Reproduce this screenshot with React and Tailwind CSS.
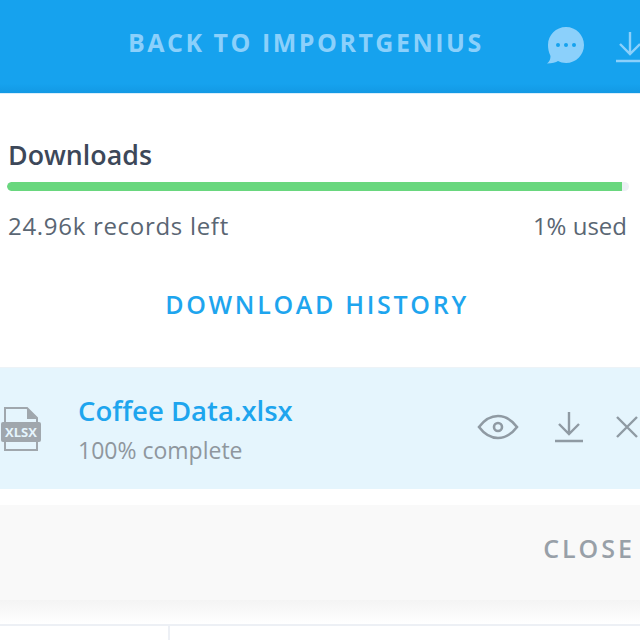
const font = { fontFamily: '"Open Sans", sans-serif' }

function DownloadIcon({ className }) {
  return (
    <svg className={className} viewBox="0 0 30 32" fill="none" stroke="currentColor" strokeWidth="2.4">
      <path d="M15 1v22M5 13l10 10 10-10M1 30h28" />
    </svg>
  )
}

function FileIcon() {
  return (
    <svg className="w-[40px] h-[44px] shrink-0" viewBox="0 0 40 44">
      <path d="M4 15V1h22l10 10v4M4 35v8h32v-8" fill="none" stroke="#a0a7ad" strokeWidth="2" />
      <path d="M26 1l10 11H26z" fill="#a0a7ad" />
      <rect x="0" y="15" width="40" height="20" rx="2" fill="#a0a7ad" />
      <text x="20" y="30" textAnchor="middle" fontSize="13" fontWeight="700" fill="#e5f5fd" fontFamily="Open Sans, sans-serif">XLSX</text>
    </svg>
  )
}

export default function App() {
  return (
    <div className="w-[640px] h-[640px] overflow-hidden bg-white flex flex-col" style={font}>
      {/* Header */}
      <div className="h-[94px] shrink-0 flex items-center pl-[128px] bg-gradient-to-b from-[#16a2ee] from-90% to-[#1299e4] border-b border-[#d9eefb] text-[#8bd0fb]">
        <span className="w-[354px] shrink-0 mb-[7px] text-[25px] font-bold tracking-[2.5px] whitespace-nowrap">BACK TO IMPORTGENIUS</span>
        <svg className="w-[40px] h-[38px] shrink-0 ml-[63px] mb-[1px]" viewBox="0 0 40 38">
          <path d="M21 0c10 0 18 8 18 18s-8 18-18 18c-3 0-6-.7-8-2-2 1.500-6 2.500-11 2.500 2.500-2 3.500-4.500 3.500-7.500C3.500 25 3 21 3 18 3 8 11 0 21 0z" fill="#8bd0fb" />
          <circle cx="13" cy="18" r="2" fill="#16a2ee" />
          <circle cx="21" cy="18" r="2" fill="#16a2ee" />
          <circle cx="29" cy="18" r="2" fill="#16a2ee" />
        </svg>
        <DownloadIcon className="w-[30px] h-[32px] shrink-0 ml-[30px]" />
      </div>

      {/* Usage */}
      <div className="h-[273px] shrink-0 flex flex-col">
        <h2 className="mt-[43px] ml-[8px] text-[26.800px] leading-[36px] font-semibold text-[#3d4859]">Downloads</h2>
        <div className="mt-[9px] mx-[7px] w-[622px] h-[9px] rounded-full bg-[#edf0f5] overflow-hidden">
          <div className="h-full w-[615px] rounded-l-full bg-[#69d77e]" />
        </div>
        <div className="mt-[17px] ml-[8px] mr-[13px] flex justify-between text-[24px] tracking-[0.7px] leading-[36px] text-[#5a6673]">
          <span>24.96k records left</span>
          <span className="tracking-normal">1% used</span>
        </div>
        <div className="mt-[43px] text-center pr-[6px] text-[25px] leading-[34px] font-semibold tracking-[2.7px] text-[#1ea5ee]">DOWNLOAD HISTORY</div>
      </div>

      {/* File row */}
      <div className="h-[122px] shrink-0 flex items-center pl-[1px] bg-[#e5f5fd] border-t border-[#edf3f7]">
        <FileIcon />
        <div className="ml-[37px] flex flex-col">
          <span className="text-[27.500px] leading-[36px] mb-[1px] font-semibold text-[#1ea5ee] whitespace-nowrap">Coffee Data.xlsx</span>
          <span className="mt-[5px] text-[23px] leading-[30px] text-[#8f979e] whitespace-nowrap">100% complete</span>
        </div>
        <div className="ml-auto flex items-center mb-[3px] text-[#8f9aa3]">
          <svg className="w-[42px] h-[26px] shrink-0" viewBox="0 0 42 26" fill="none" stroke="currentColor" strokeWidth="2.6">
            <path d="M2 13C8 5 14 2 21 2s13 3 19 11c-6 8-12 11-19 11S8 21 2 13z" />
            <circle cx="21" cy="13" r="4" />
          </svg>
          <DownloadIcon className="w-[30px] h-[32px] shrink-0 ml-[35px]" />
          <svg className="w-[24px] h-[24px] shrink-0 ml-[31px] mr-[1px]" viewBox="0 0 24 24" fill="none" stroke="currentColor" strokeWidth="2.4">
            <path d="M2 2l20 20M22 2L2 22" />
          </svg>
        </div>
      </div>

      {/* Footer */}
      <div className="mt-[16px] h-[95px] shrink-0 flex items-center justify-end pr-[5px] pb-[7px] bg-[#f9f9f9]">
        <span className="text-[25px] font-semibold tracking-[3px] text-[#98a0a8]">CLOSE</span>
      </div>
      <div className="h-[24px] shrink-0 bg-gradient-to-b from-[#f4f4f4] to-white" />

      {/* Table behind */}
      <div className="flex-1 flex border-t-2 border-[#edf0f5]">
        <div className="w-[170px] border-r-2 border-[#edf0f5]" />
      </div>
    </div>
  )
}
